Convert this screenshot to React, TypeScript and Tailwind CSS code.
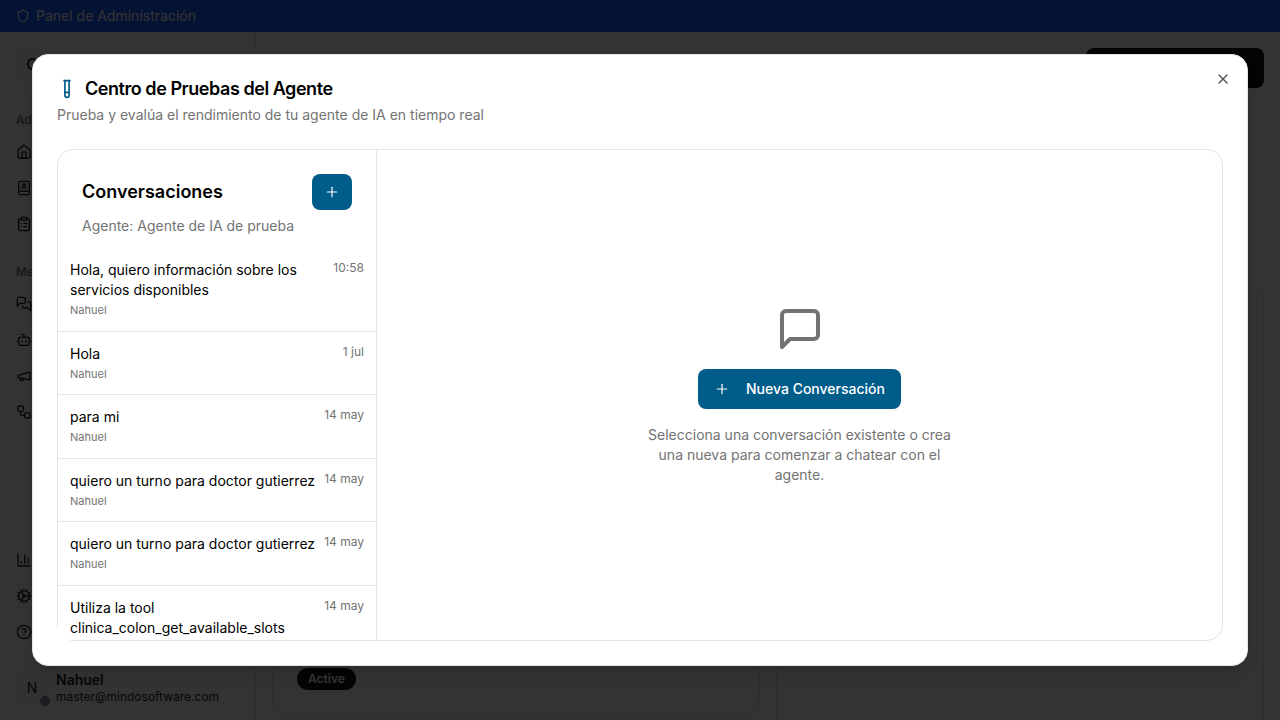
import {
  BookUser,
  Bot,
  ChartColumn,
  CircleQuestionMark,
  ClipboardList,
  Cog,
  House,
  Plus,
  Shield,
  TestTube,
  Workflow,
  X,
} from 'lucide-react'

type Conversation = {
  id: number
  title: string
  date: string
  user?: string
}

const conversations: Conversation[] = [
  { id: 1, title: 'Hola, quiero información sobre los servicios disponibles', user: 'Nahuel', date: '10:58' },
  { id: 2, title: 'Hola', user: 'Nahuel', date: '1 jul' },
  { id: 3, title: 'para mi', user: 'Nahuel', date: '14 may' },
  { id: 4, title: 'quiero un turno para doctor gutierrez', user: 'Nahuel', date: '14 may' },
  { id: 5, title: 'quiero un turno para doctor gutierrez', user: 'Nahuel', date: '14 may' },
  { id: 6, title: 'Utiliza la tool clinica_colon_get_available_slots', date: '14 may' },
]

function Icon({ paths, className }: { paths: string[]; className: string }) {
  return (
    <svg className={className} viewBox="0 0 24 24" fill="none" stroke="currentColor" strokeWidth="2" strokeLinecap="round" strokeLinejoin="round">
      {paths.map((d) => (
        <path key={d} d={d} />
      ))}
    </svg>
  )
}

const bubble = ['M21 15a2 2 0 0 1-2 2H7l-4 4V5a2 2 0 0 1 2-2h14a2 2 0 0 1 2 2z']
const bubbles = [
  'M14 9a2 2 0 0 1-2 2H6l-4 4V4a2 2 0 0 1 2-2h8a2 2 0 0 1 2 2z',
  'M18 9h2a2 2 0 0 1 2 2v11l-4-4h-6a2 2 0 0 1-2-2v-1',
]
const megaphone = ['m3 11 18-5v12L3 14v-3z', 'M11.6 16.8a3 3 0 1 1-5.8-1.6']

function Sidebar() {
  return (
    <aside className="flex w-64 shrink-0 flex-col border-r border-gray-200 text-neutral-800">
      <div className="mx-4 mt-4 flex h-8 w-8 items-center justify-center rounded-lg bg-gray-50 text-base font-medium">C</div>
      <div className="mt-8 flex h-4 items-center px-4 text-xs font-medium text-gray-500">Ad</div>
      <nav className="mt-4 flex flex-col gap-5 px-4">
        <House className="size-4" />
        <BookUser className="size-4" />
        <ClipboardList className="size-4" />
      </nav>
      <div className="mt-8 flex h-4 items-center px-4 text-xs font-medium text-gray-500">Me</div>
      <nav className="mt-4 flex flex-col gap-5 px-4">
        <Icon paths={bubbles} className="size-4" />
        <Bot className="size-4" />
        <Icon paths={megaphone} className="size-4" />
        <Workflow className="size-4" />
      </nav>
      <nav className="mt-auto flex flex-col gap-5 px-4">
        <ChartColumn className="size-4" />
        <Cog className="size-4" />
        <CircleQuestionMark className="size-4" />
      </nav>
      <div className="mt-8 mb-4 flex h-8 items-center gap-2 px-4">
        <div className="relative flex size-8 items-center justify-center rounded-lg bg-gray-50 text-sm">
          N
          <span className="absolute -right-0.5 -bottom-[2px] size-2.5 rounded-full bg-[#8d8fb0]" />
        </div>
        <div className="pb-px">
          <p className="text-sm leading-[18px] font-semibold">Nahuel</p>
          <p className="text-xs leading-4">master@mindosoftware.com</p>
        </div>
      </div>
    </aside>
  )
}

function Dashboard() {
  return (
    <div className="flex h-full flex-col bg-white">
      <header className="flex h-8 shrink-0 items-center gap-1.5 bg-[#155dfc] px-4 text-sm text-white">
        <Shield className="size-3.5" />
        <span>Panel de Administración</span>
      </header>
      <div className="flex min-h-0 flex-1">
        <Sidebar />
        <main className="flex min-w-0 flex-1 flex-col p-4 pb-0">
          <div className="flex justify-end">
            <div className="h-10 w-[178px] rounded-lg bg-neutral-900" />
          </div>
          <div className="mt-auto flex h-[435px] gap-4">
            <div className="mb-1 flex w-[488px] flex-col justify-end rounded-2xl border border-gray-200 px-6 pb-[25px]">
              <span className="w-fit rounded-full bg-neutral-900 px-[11px] py-[3px] text-xs font-semibold text-white">Active</span>
            </div>
            <div className="flex-1 rounded-t-2xl border border-b-0 border-gray-200" />
          </div>
        </main>
      </div>
    </div>
  )
}

function ConversationList() {
  return (
    <div className="flex w-[319px] shrink-0 flex-col border-r border-[#e5e5e5]">
      <div className="flex flex-col gap-1.5 px-6 pt-6 pb-3">
        <div className="flex items-center justify-between">
          <h3 className="text-lg font-semibold">Conversaciones</h3>
          <button className="flex h-9 w-10 items-center justify-center rounded-lg bg-[#005d8a] text-white">
            <Plus className="size-4" strokeWidth={1.75} />
          </button>
        </div>
        <p className="text-sm text-[#737373]">Agente: Agente de IA de prueba</p>
      </div>
      <div className="min-h-0 flex-1 overflow-hidden bg-white">
        {conversations.map((c) => (
          <div key={c.id} className="border-b border-[#e5e5e5] p-3">
            <div className="flex items-start justify-between gap-2">
              <div className="min-w-0 flex-1">
                <p className="text-sm">{c.title}</p>
                {c.user && <p className="mt-0.5 text-[11px] leading-[16.5px] text-[#737373]">{c.user}</p>}
              </div>
              <span className="shrink-0 text-xs text-[#737373]">{c.date}</span>
            </div>
          </div>
        ))}
      </div>
    </div>
  )
}

function EmptyChat() {
  return (
    <div className="flex flex-1 flex-col items-center justify-center">
      <Icon paths={bubble} className="mb-4 size-12 text-[#737373]" />
      <button className="mb-4 flex h-10 items-center gap-2 rounded-lg bg-[#005d8a] px-4 text-sm font-medium text-white">
        <Plus className="mr-2 size-4" strokeWidth={1.75} />
        Nueva Conversación
      </button>
      <p className="w-80 text-center text-sm text-[#737373]">
        Selecciona una conversación existente o crea una nueva para comenzar a chatear con el agente.
      </p>
    </div>
  )
}

export default function App() {
  return (
    <div className="relative h-screen w-full overflow-hidden font-['Inter',sans-serif] text-black">
      <Dashboard />
      <div className="absolute inset-0 flex items-center justify-center bg-black/80">
        <div className="relative flex h-[612px] w-[1216px] flex-col rounded-2xl border border-[#e5e5e5] bg-white p-6 shadow-lg">
          <button className="absolute top-4 right-4 p-0 text-neutral-600">
            <X className="size-4" />
          </button>
          <div className="mb-6 flex flex-col gap-1.5">
            <h2 className="flex items-center gap-2 text-lg leading-5 font-semibold tracking-tight">
              <TestTube className="size-5 text-[#005d8a]" />
              Centro de Pruebas del Agente
            </h2>
            <p className="text-sm text-[#737373]">Prueba y evalúa el rendimiento de tu agente de IA en tiempo real</p>
          </div>
          <div className="flex min-h-0 flex-1 rounded-2xl border border-[#e5e5e5]">
            <ConversationList />
            <EmptyChat />
          </div>
        </div>
      </div>
    </div>
  )
}
